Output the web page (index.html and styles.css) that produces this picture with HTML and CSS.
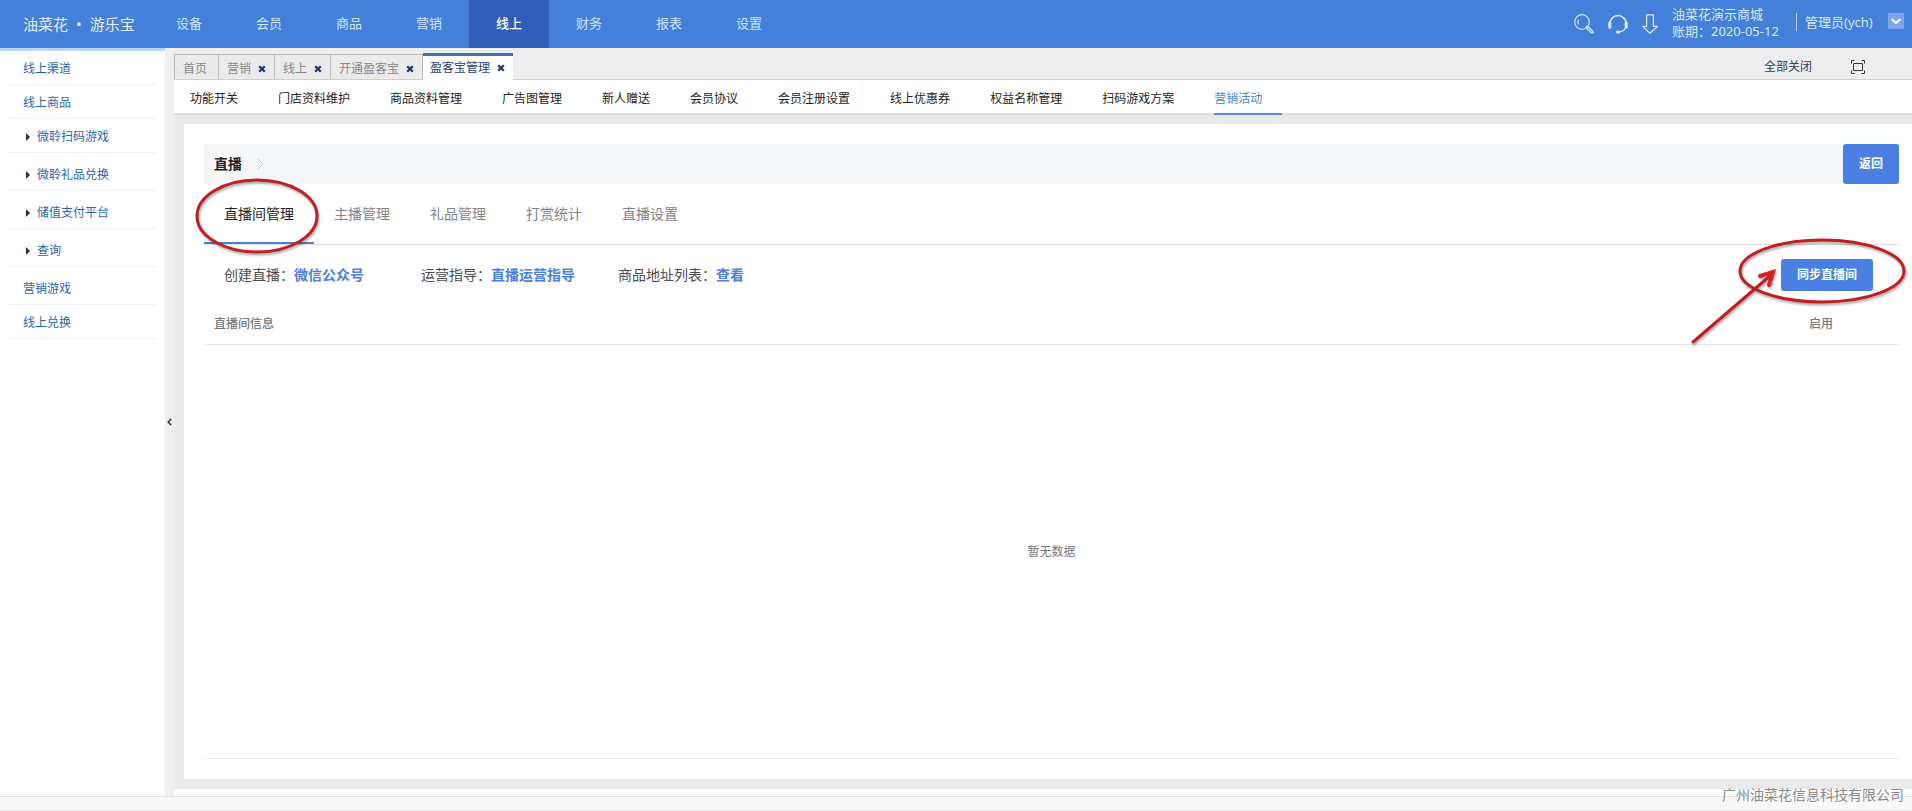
FILE: index.html
```html
<!DOCTYPE html>
<html lang="zh-CN">
<head>
<meta charset="utf-8">
<title>油菜花 · 游乐宝</title>
<link rel="stylesheet" href="styles.css">
</head>
<body>
<svg class="sprite" aria-hidden="true">
  <symbol id="close" viewBox="0 0 8 8"><path d="M1.200 1.200 6.800 6.800M6.800 1.200 1.200 6.800" fill="none" stroke="#1f3864" stroke-width="2.300"/></symbol>
</svg>
<header class="topbar">
  <a class="brand" href="#"><span>油菜花</span><span>•</span><span>游乐宝</span></a>
  <nav class="mainnav">
    <a href="#">设备</a>
    <a href="#">会员</a>
    <a href="#">商品</a>
    <a href="#">营销</a>
    <a href="#" class="active">线上</a>
    <a href="#">财务</a>
    <a href="#">报表</a>
    <a href="#">设置</a>
  </nav>
  <div class="tools">
    <button class="tool" aria-label="搜索"><svg width="20" height="20" viewBox="0 0 20 20" fill="none" stroke="#c8e0ff"><circle cx="8" cy="8" r="7.300" stroke-width="1.300"/><path d="M4.600 5.600a4.400 4.400 0 0 0 0 4.800" stroke-width="1.200"/><path d="M13.200 13.400 18 18" stroke-width="3.600" stroke-linecap="round"/><path d="M14 14.200 18 18" stroke="#7fb0f2" stroke-width="1.200" stroke-linecap="round"/></svg></button>
    <button class="tool" aria-label="客服"><svg width="20" height="20" viewBox="0 0 20 20" fill="none" stroke="#dcebff"><path d="M2 10.500V9.500a8 8 0 0 1 16 0v1" stroke-width="1.600"/><path d="M1.800 8.800v4.400M18.200 8.800v4.400" stroke-width="3" stroke-linecap="round"/><path d="M18 13c-1 3-3.500 4.600-7 5" stroke-width="1.200"/><ellipse cx="10" cy="18" rx="2.400" ry="1.500" fill="#dcebff" stroke="none"/></svg></button>
    <button class="tool" aria-label="下载"><svg width="16" height="20" viewBox="0 0 16 20" fill="none" stroke="#dcebff" stroke-width="1.200" stroke-linejoin="round"><path d="M4.600 .8h6.800v11.600h4L8 19.200.6 12.400h4z"/></svg></button>
  </div>
  <div class="shop"><span>油菜花演示商城</span><span>账期：2020-05-12</span></div>
  <div class="user">管理员(ych)</div>
  <button class="more" aria-label="更多"><svg width="16" height="16" viewBox="0 0 16 16" fill="none" stroke="#fff" stroke-width="2"><path d="M3.500 6 8 10l4.500-4"/></svg></button>
</header>
<div class="body">
  <aside class="side">
    <a class="item" href="#">线上渠道</a>
    <a class="item" href="#">线上商品</a>
    <a class="item sub first" href="#">微聆扫码游戏</a>
    <a class="item sub" href="#">微聆礼品兑换</a>
    <a class="item sub" href="#">储值支付平台</a>
    <a class="item sub" href="#">查询</a>
    <a class="item tall" href="#">营销游戏</a>
    <a class="item" href="#">线上兑换</a>
  </aside>
  <div class="gutter"><button class="fold" aria-label="收起"><svg width="5" height="8" viewBox="0 0 5 8" fill="none" stroke="#333" stroke-width="1.500"><path d="M4.200.8 1.200 4l3 3.200"/></svg></button></div>
  <main class="work">
    <div class="pagetabs">
      <div class="ptab"><a href="#">首页</a></div>
      <div class="ptab"><a href="#">营销</a><button class="x" aria-label="关闭"><svg width="8" height="8"><use href="#close"/></svg></button></div>
      <div class="ptab"><a href="#">线上</a><button class="x" aria-label="关闭"><svg width="8" height="8"><use href="#close"/></svg></button></div>
      <div class="ptab"><a href="#">开通盈客宝</a><button class="x" aria-label="关闭"><svg width="8" height="8"><use href="#close"/></svg></button></div>
      <div class="ptab current"><a href="#">盈客宝管理</a><button class="x" aria-label="关闭"><svg width="8" height="8"><use href="#close"/></svg></button></div>
      <button class="closeall">全部关闭</button>
      <button class="full" aria-label="全屏"><svg width="14" height="14" viewBox="0 0 14 14" fill="none" stroke="#333"><path d="M.5 3.500v-3h3M10.500.5h3v3M13.500 10.500v3h-3M3.500 13.500h-3v-3M2.500 3.500h9v7h-9z"/></svg></button>
    </div>
    <nav class="subnav">
      <a href="#">功能开关</a>
      <a href="#">门店资料维护</a>
      <a href="#">商品资料管理</a>
      <a href="#">广告图管理</a>
      <a href="#">新人赠送</a>
      <a href="#">会员协议</a>
      <a href="#">会员注册设置</a>
      <a href="#">线上优惠券</a>
      <a href="#">权益名称管理</a>
      <a href="#">扫码游戏方案</a>
      <a href="#" class="active">营销活动</a>
    </nav>
    <div class="canvas">
      <section class="panel">
        <div class="crumb">
          <h1>直播</h1>
          <svg width="7" height="12" viewBox="0 0 7 12" fill="none" stroke="#c4c6ca"><path d="M1 1l5 5-5 5"/></svg>
          <button class="btn back">返回</button>
        </div>
        <nav class="tabs">
          <a href="#" class="active">直播间管理</a>
          <a href="#">主播管理</a>
          <a href="#">礼品管理</a>
          <a href="#">打赏统计</a>
          <a href="#">直播设置</a>
        </nav>
        <div class="info">
          <p>创建直播：<a href="#">微信公众号</a></p>
          <p>运营指导：<a href="#">直播运营指导</a></p>
          <p>商品地址列表：<a href="#">查看</a></p>
          <button class="btn sync">同步直播间</button>
        </div>
        <table class="rooms">
          <thead><tr><th>直播间信息</th><th class="enable">启用</th></tr></thead>
        </table>
        <div class="empty">暂无数据</div>
        <svg class="mark mark-tab" width="126" height="80" viewBox="0 0 126 80" fill="none" stroke="#c01f22" stroke-width="3"><ellipse cx="62" cy="38" rx="60" ry="36"/></svg>
        <svg class="mark mark-sync" width="222" height="116" viewBox="0 0 222 116" fill="none" stroke="#c01f22" stroke-width="3" stroke-linecap="round"><ellipse cx="133" cy="35" rx="82" ry="31"/><path d="M4 106 82 39"/><path d="M71 40l13-4-4 13" stroke="#d81e20" stroke-width="4"/></svg>
      </section>
    </div>
  </main>
</div>
<footer class="foot"><span class="company">广州油菜花信息科技有限公司</span></footer>
</body>
</html>
```

FILE: styles.css
```css
* { box-sizing: border-box; }
body {
  margin: 0;
  min-height: 100vh;
  display: flex;
  flex-direction: column;
  background: #fff;
  font: 12px/18px "Noto Sans", "Noto Sans CJK SC", sans-serif;
  color: #333;
}
a { text-decoration: none; color: inherit; }
button { border: 0; padding: 0; background: none; font: inherit; color: inherit; display: flex; align-items: center; justify-content: center; }
svg { display: block; flex: none; }
h1, p { margin: 0; }
.sprite { position: absolute; width: 0; height: 0; }

.topbar { display: flex; align-items: center; height: 48px; background: #447fd9; color: #d3e6ff; font-size: 13px; }
.brand { display: flex; gap: 8px; width: 149px; padding-left: 23px; font-size: 15px; line-height: 46px; white-space: nowrap; color: #e8f2ff; }
.mainnav { display: flex; flex: 1; }
.mainnav a { width: 80px; height: 48px; line-height: 47px; text-align: center; }
.mainnav .active { background: #305dba; color: #fff; font-weight: 500; }
.tools { display: flex; align-items: center; gap: 14px; margin-right: 14px; }
.shop { display: flex; flex-direction: column; width: 124px; margin-bottom: 2px; line-height: 17px; color: #d9e9ff; white-space: nowrap; }
.user { padding-left: 8px; width: 92px; margin-bottom: 4px; line-height: 18px; border-left: 1px solid #b5d2fa; white-space: nowrap; color: #d9e9ff; }
.more { width: 16px; height: 16px; margin: 0 8px 6px 0; background: #7ba6e9; }

.body { flex: 1; display: flex; }
.side { width: 165px; flex: none; padding: 0 9px 0 8px; border-top: 3px solid #b9d6f9; color: #2b63b5; }
.item { display: block; height: 34px; padding: 9px 0 0 15px; line-height: 18px; border-bottom: 1px solid #f0f0f0; }
.item.tall { height: 38px; padding-top: 13px; }
.item.sub { display: flex; align-items: center; gap: 7px; height: 38px; padding: 6px 0 0 18px; }
.item.sub::before { content: ""; border: 4px solid transparent; border-left-color: #1c2f4c; border-right: 0; }
.item.sub.first { height: 34px; padding-top: 2px; }
.gutter { width: 9px; flex: none; display: flex; align-items: center; background: #efefef; }
.fold { width: 9px; height: 40px; }

.work { flex: 1; min-width: 0; display: flex; flex-direction: column; padding-bottom: 7px; }
.pagetabs { display: flex; align-items: flex-end; height: 32px; background: #eee; border-bottom: 1px solid #d0d0d0; color: #888; }
.ptab { display: flex; align-items: center; gap: 6px; height: 25px; padding: 4px 8px 0; border: 1px solid #bbb; border-width: 1px 1px 0 0; background: #ebebeb; }
.ptab:first-child { border-left-width: 1px; padding-right: 11px; }
.ptab.current { height: 27px; margin-bottom: -1px; padding: 0 8px 0 7px; border-top: 3px solid #3f6fb5; border-right: 0; background: #fff; color: #1f3f7a; }
.x { width: 9px; height: 12px; }
.closeall { margin-left: auto; height: 24px; color: #2c3e63; }
.full { margin: 0 47px 0 39px; height: 24px; }
.subnav { display: flex; gap: 20px; height: 35px; padding-left: 16px; background: #fff; border-bottom: 2px solid #dddfe3; color: #222; }
.subnav a { height: 35px; padding-right: 20px; line-height: 37px; white-space: nowrap; }
.subnav .active { color: #4a84d8; border-bottom: 2px solid #5b8cd0; }
.canvas { flex: 1; display: flex; padding: 9px 0 10px 10px; background: #eaeaea; }

.panel { position: relative; flex: 1; display: flex; flex-direction: column; padding: 20px 13px 20px 20px; background: #fff; font-size: 14px; }
.crumb { display: flex; align-items: center; height: 40px; padding-left: 10px; background: #f5f6f8; }
.crumb h1 { margin-right: 15px; font-size: 14px; line-height: 20px; font-weight: 700; color: #222; }
.btn { background: #4a7fe3; color: #fff; font-size: 12px; font-weight: 700; border-radius: 3px; }
.back { margin-left: auto; width: 56px; height: 40px; }
.tabs { display: flex; height: 61px; border-bottom: 1px solid #dcdee2; color: #808389; }
.tabs a { padding: 0 20px; line-height: 60px; height: 60px; white-space: nowrap; }
.tabs .active { color: #222; border-bottom: 2px solid #4a80dc; }
.info { display: flex; align-items: center; height: 60px; padding: 0 26px 0 20px; color: #4a4c50; }
.info p { width: 197px; line-height: 20px; white-space: nowrap; }
.info a { color: #4a80e0; font-weight: 700; }
.sync { margin-left: auto; width: 92px; height: 32px; }
.rooms { width: 100%; border-collapse: collapse; border-bottom: 1px solid #e4e5e8; }
.rooms th { height: 39px; padding: 0 0 0 10px; text-align: left; font-size: 12px; font-weight: 500; line-height: 18px; color: #75787e; }
.rooms .enable { width: 156px; padding: 0; text-align: center; }
.empty { flex: 1; display: flex; align-items: center; justify-content: center; padding-top: 2px; border-bottom: 1px solid #e8eaec; font-size: 12px; color: #777; }
.mark { position: absolute; pointer-events: none; filter: drop-shadow(1px 2px 1px #00000055); }
.mark-tab { left: 11px; top: 54px; }
.mark-sync { right: 1px; top: 112px; }

.foot { position: relative; height: 15px; background: #f8f8f8; border: 1px solid #e0e0e0; border-width: 1px 0; }
.company { position: absolute; right: 8px; bottom: 5px; font-size: 14px; line-height: 20px; color: #888; text-shadow: 1px 1px 0 #fff; }
```
